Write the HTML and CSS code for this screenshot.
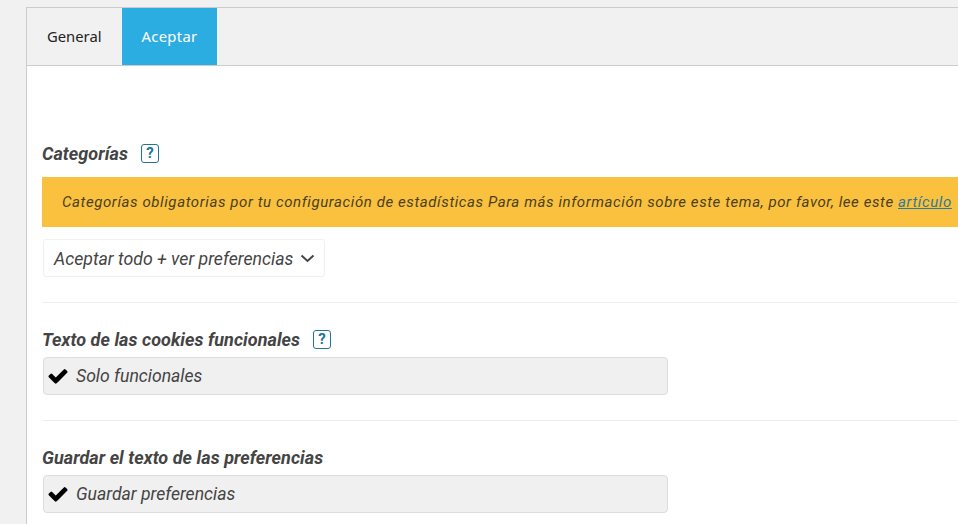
FILE: index.html
```html
<!DOCTYPE html>
<html lang="es">
<head>
  <meta charset="UTF-8" />
  <meta name="viewport" content="width=device-width, initial-scale=1.0"/>
  <title>Aceptar</title>
  <link rel="stylesheet" href="styles.css">
</head>
<body>

  <div class="panel">
    <!-- Tabs -->
    <div class="tabs">
      <div class="tab">General</div>
      <div class="tab active">Aceptar</div>
    </div>

    <div class="content">
      <!-- Categories -->
      <div class="section first">
        <div class="label">Categorías <span class="help">?</span></div>
        <div class="notice">Categorías obligatorias por tu configuración de estadísticas Para más información sobre este tema, por favor, lee este <a href="#">artículo</a></div>
        <div class="select">
          <span class="select-text">Aceptar todo + ver preferencias</span>
          <svg class="chevron" viewBox="0 0 15 9"><path d="M1.500 1.500 7.500 7l6-5.500" fill="none" stroke="#444" stroke-width="2"/></svg>
        </div>
      </div>

      <!-- Functional text -->
      <div class="section">
        <div class="label">Texto de las cookies funcionales <span class="help">?</span></div>
        <div class="input">
          <svg class="check" viewBox="0 0 1792 1792"><path d="M1671 566q0 40-28 68l-724 724-136 136q-28 28-68 28t-68-28l-136-136-362-362q-28-28-28-68t28-68l136-136q28-28 68-28t68 28l294 295 656-657q28-28 68-28t68 28l136 136q28 28 28 68z"/></svg>
          Solo funcionales
        </div>
      </div>

      <!-- Preferences text -->
      <div class="section">
        <div class="label">Guardar el texto de las preferencias</div>
        <div class="input">
          <svg class="check" viewBox="0 0 1792 1792"><path d="M1671 566q0 40-28 68l-724 724-136 136q-28 28-68 28t-68-28l-136-136-362-362q-28-28-28-68t28-68l136-136q28-28 68-28t68 28l294 295 656-657q28-28 68-28t68 28l136 136q28 28 28 68z"/></svg>
          Guardar preferencias
        </div>
      </div>
    </div>
  </div>

</body>
</html>
```

FILE: styles.css
```css
* {
  box-sizing: border-box;
  margin: 0;
  padding: 0;
}
html, body {
  height: 524px;
  overflow: hidden;
}
body {
  background-color: #f1f1f1;
  padding: 7px 0 0 26px;
  font-family: "Roboto", sans-serif;
  font-style: italic;
  color: #3c3c3c;
}
.panel {
  width: 932px;
  height: 517px;
  overflow: hidden;
  background-color: #fff;
  border: 1px solid #ccc;
  border-right: none;
  border-bottom: none;
}
.tabs {
  display: flex;
  height: 58px;
  background-color: #f1f1f1;
  border-bottom: 1px solid #ccc;
}
.tab {
  padding: 0 20px;
  line-height: 57px;
  font-family: "Noto Sans", sans-serif;
  font-style: normal;
  font-size: 14.8px;
  color: #222;
}
.tab.active {
  letter-spacing: 0.3px;
  background-color: #2cade2;
  color: #fff;
}
.content {
  padding: 0 0 0 15px;
}
.section {
  border-top: 1px solid #eee;
  padding-top: 25px;
  padding-bottom: 25px;
}
.section.first {
  border-top: none;
  padding-top: 76px;
}
.label {
  display: flex;
  align-items: center;
  gap: 13px;
  height: 22px;
  margin-bottom: 7px;
  font-size: 18px;
  font-weight: 700;
  letter-spacing: 0.05px;
  white-space: nowrap;
  color: #444;
}
.first .label {
  margin-bottom: 13px;
}
.help {
  display: block;
  width: 18px;
  height: 19px;
  border: 1px solid #21759b;
  border-radius: 3px;
  font-size: 15px;
  line-height: 17px;
  text-align: center;
  font-style: normal;
  font-weight: 700;
  color: #21759b;
}
.notice {
  height: 50px;
  padding-left: 20px;
  line-height: 50px;
  font-size: 15px;
  letter-spacing: 0.59px;
  white-space: nowrap;
  background-color: #fac13f;
  color: #4a4020;
}
.notice a {
  color: #2f7a96;
}
.select {
  display: inline-flex;
  align-items: center;
  gap: 7px;
  height: 38px;
  margin: 12px 0 0 1px;
  padding: 0 9px 0 10px;
  border: 1px solid #f0f0f0;
  border-radius: 3px;
  font-size: 17.7px;
  color: #444;
}
.select-text {
  padding-top: 1px;
}
.chevron {
  width: 15px;
  height: 9px;
}
.input {
  display: flex;
  align-items: center;
  gap: 7px;
  width: 625px;
  height: 38px;
  margin-left: 1px;
  padding-left: 3px;
  background-color: #f0f0f0;
  border: 1px solid #ddd;
  border-radius: 4px;
  font-size: 17.6px;
  color: #444;
}
.check {
  width: 22px;
  height: 22px;
}
```
